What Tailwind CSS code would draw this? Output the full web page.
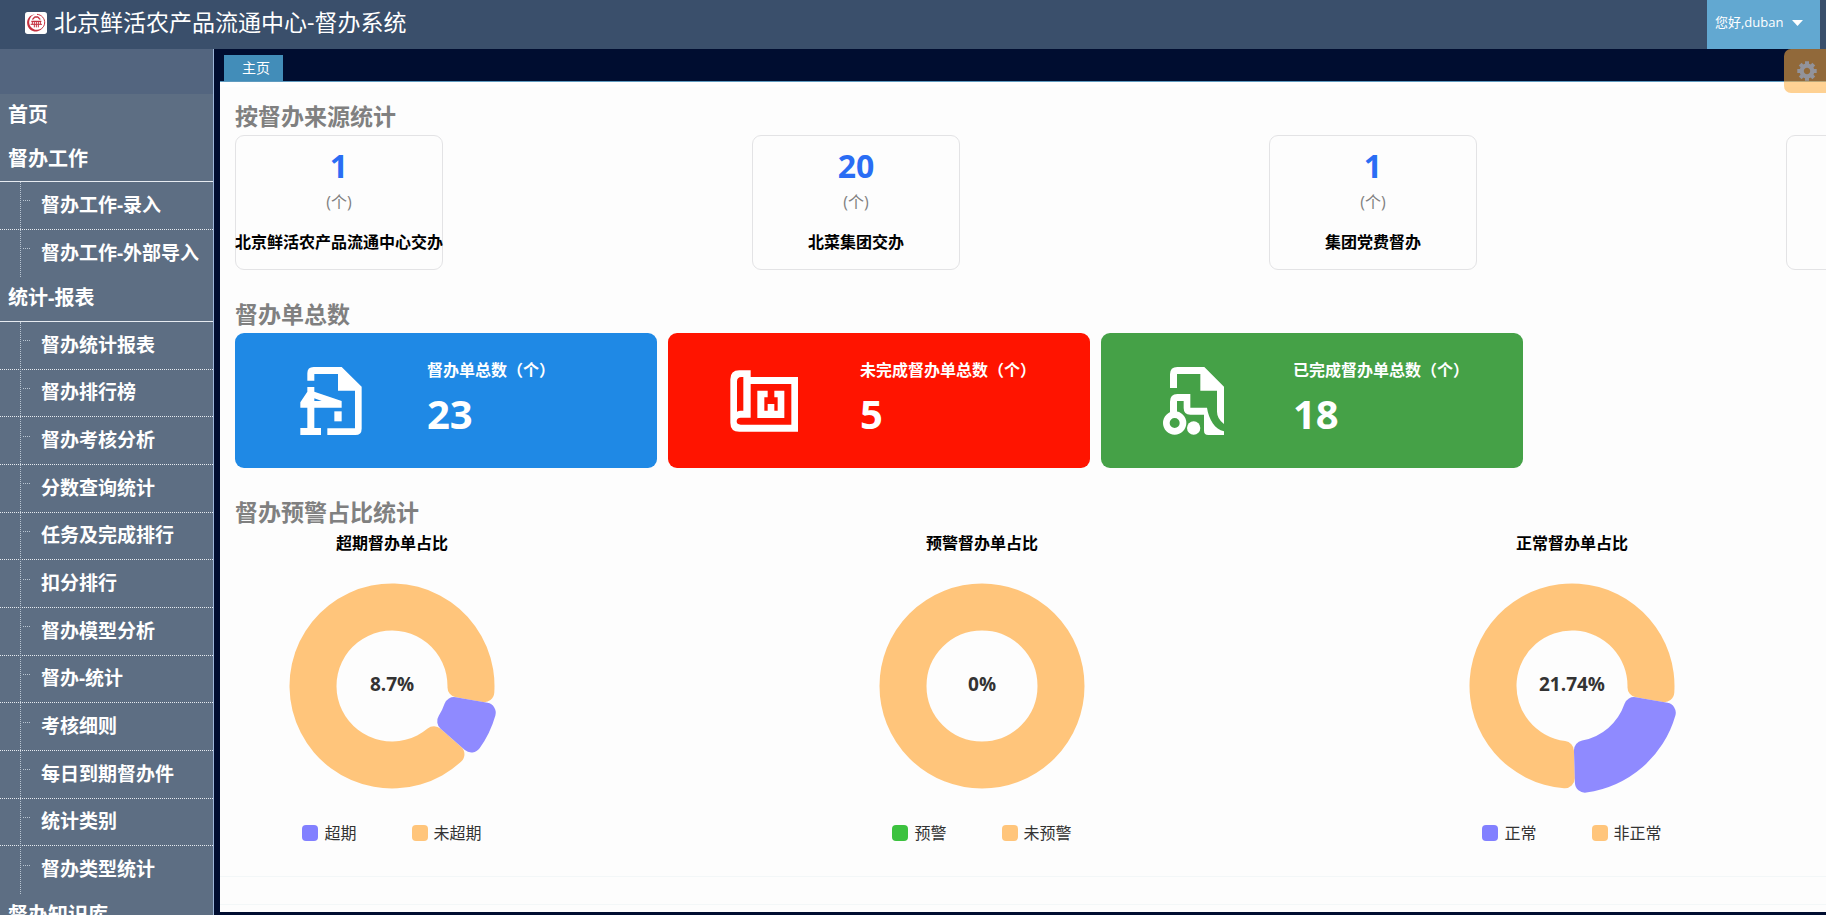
<!DOCTYPE html>
<html lang="zh-CN">
<head>
<meta charset="utf-8">
<title>北京鲜活农产品流通中心-督办系统</title>
<script src="https://cdn.jsdelivr.net/npm/@tailwindcss/browser@4"></script>
</head>
<body class="flex h-screen flex-col overflow-hidden bg-[#000d30] font-['Open_Sans','Noto_Sans_CJK_SC',sans-serif] text-black">

<header class="flex h-[49px] shrink-0 items-stretch justify-between bg-[#3a4f6b] pr-[6px] pl-[25px] text-white">
  <div class="flex items-center gap-[7px] pb-[6px]">
    <svg class="mt-[2px] size-[22px]" viewBox="0 0 66 66" aria-hidden="true">
      <rect width="66" height="66" rx="8" fill="#fff"/>
      <path d="M30 7C12 9 4 24 7 38C10 52 24 61 38 58C46 56 51 52 54 46C46 54 34 56 24 50C13 43 10 30 15 20C18 13 23 9 30 7Z" fill="#c4303f"/>
      <g fill="none" stroke="#c4303f">
        <path d="M36 7C50 8 60 20 59 33C58 41 55 46 50 49" stroke-width="3"/>
        <path d="M28 15H40M22 22C26 21 27 19 28 16M46 22C42 21 41 19 40 16M19 28H49" stroke-width="4"/>
        <path d="M22 29V37M46 29V37M17 37H51M28 30V46M34 30V46M40 30V46" stroke-width="3"/>
      </g>
    </svg>
    <h1 class="text-[23px] leading-8">北京鲜活农产品流通中心-督办系统</h1>
  </div>
  <button type="button" class="flex w-[113px] items-center gap-[9px] bg-[#62a8d1] pb-[4px] pl-[8px] text-[13px] whitespace-nowrap">
    <span class="pt-px">您好,duban</span>
    <svg class="h-[6px] w-[11px]" viewBox="0 0 11 6" aria-hidden="true"><path d="M0 0h11L5.500 6z" fill="#fff"/></svg>
  </button>
</header>

<div class="relative flex min-h-0 flex-1">
  <nav class="w-[214px] shrink-0 overflow-hidden border-r border-[#9db7da] bg-[#5d6e83] font-bold whitespace-nowrap text-white" aria-label="主菜单">
    <div class="h-[45px] bg-[#53657f]"></div>
    <a href="#" class="flex h-[43px] items-center pb-[2px] pl-2 text-[20px]">首页</a>
    <a href="#" class="flex h-[45px] items-center border-b border-[#e6ebf1] pl-2 text-[20px]">督办工作</a>
    <ul id="menu-work" class="relative grid h-[95px] auto-rows-fr text-[19px]"></ul>
    <a href="#" class="flex h-[45px] items-center border-b border-[#e6ebf1] pb-[2px] pl-2 text-[20px]">统计-报表</a>
    <ul id="menu-report" class="relative grid h-[572px] auto-rows-fr text-[19px]"></ul>
    <a href="#" class="flex h-[45px] items-center pb-[4px] pl-2 text-[20px]">督办知识库</a>
  </nav>

  <div class="flex min-w-0 flex-1 flex-col pb-[3px] pl-[6px]">
    <div class="flex h-[33px] shrink-0 items-end border-b border-[#5f9bc0] pl-1">
      <button type="button" class="h-[26px] w-[59px] bg-[#428db9] pl-[5px] text-[14px] leading-[26px] text-white">主页</button>
    </div>

    <main class="min-h-0 flex-1 overflow-hidden bg-[#fdfdfd]">
      <div class="h-[5px] bg-white"></div>
      <section class="pt-[14px] pl-[15px]">
        <h2 class="mb-1 text-[23px] leading-[30px] font-bold text-[#808080]">按督办来源统计</h2>
        <div class="flex gap-[309px]">
          <article class="flex h-[135px] w-[208px] shrink-0 flex-col items-center rounded-[9px] border border-[#e3e3e5] pt-[11px] whitespace-nowrap">
            <strong class="text-[32px] leading-[38px] text-[#2a6df4]">1</strong>
            <span class="mt-[5px] text-[16px] leading-6 text-[#808080]">(个)</span>
            <h3 class="mt-4 text-[16px] leading-6 font-bold">北京鲜活农产品流通中心交办</h3>
          </article>
          <article class="flex h-[135px] w-[208px] shrink-0 flex-col items-center rounded-[9px] border border-[#e3e3e5] pt-[11px] whitespace-nowrap">
            <strong class="text-[32px] leading-[38px] text-[#2a6df4]">20</strong>
            <span class="mt-[5px] text-[16px] leading-6 text-[#808080]">(个)</span>
            <h3 class="mt-4 text-[16px] leading-6 font-bold">北菜集团交办</h3>
          </article>
          <article class="flex h-[135px] w-[208px] shrink-0 flex-col items-center rounded-[9px] border border-[#e3e3e5] pt-[11px] whitespace-nowrap">
            <strong class="text-[32px] leading-[38px] text-[#2a6df4]">1</strong>
            <span class="mt-[5px] text-[16px] leading-6 text-[#808080]">(个)</span>
            <h3 class="mt-4 text-[16px] leading-6 font-bold">集团党费督办</h3>
          </article>
          <article class="h-[135px] w-[208px] shrink-0 rounded-[9px] border border-[#e3e3e5]"></article>
        </div>
      </section>

      <section class="pt-[29px] pl-[15px]">
        <h2 class="mb-1 text-[23px] leading-[30px] font-bold text-[#808080]">督办单总数</h2>
        <div class="flex gap-[11px] text-white">
          <article class="flex h-[135px] w-[422px] shrink-0 items-center gap-14 rounded-[9px] bg-[#1f89e5] pl-14">
            <svg class="size-20" viewBox="213 213 240 240" fill="#fff" fill-rule="evenodd" aria-hidden="true">
              <path d="M262 272V250Q262 231 281 231H365L425 290V416Q425 435 406 435H322V415H405V302H354V252H283V272Z"/>
              <path d="M262 291H283V305L365 333V353H283V414H303V435H241V414H262V353H241V337L262 305ZM283 325V333H305Z"/>
              <path d="M343 364H365V394H343Z"/>
            </svg>
            <div class="pb-[2px]">
              <h3 class="text-[16px] leading-6 font-bold">督办单总数（个）</h3>
              <p class="mt-1 text-[40px] leading-[56px] font-bold">23</p>
            </div>
          </article>
          <article class="flex h-[135px] w-[422px] shrink-0 items-center gap-14 rounded-[9px] bg-[#ff1400] pl-14">
            <svg class="size-20" viewBox="192 123 240 240" fill="#fff" fill-rule="evenodd" aria-hidden="true">
              <path d="M272 151H238Q211 151 211 178V308Q211 335 238 335H414V171H272ZM250 171V272H242Q236 272 231 275V185Q231 171 244 171ZM272 192H394V314H242Q230 314 230 304Q230 293 242 293H272Z"/>
              <path d="M292 212H323V232H313V272H323V252H343V272H353V232H343V212H373V294H292Z"/>
            </svg>
            <div class="pb-[2px]">
              <h3 class="text-[16px] leading-6 font-bold">未完成督办单总数（个）</h3>
              <p class="mt-1 text-[40px] leading-[56px] font-bold">5</p>
            </div>
          </article>
          <article class="flex h-[135px] w-[422px] shrink-0 items-center gap-14 rounded-[9px] bg-[#45a147] pl-14">
            <svg class="size-20" viewBox="201 123 240 240" fill="#fff" fill-rule="evenodd" aria-hidden="true">
              <path d="M240 204V163Q240 141 262 141H343L402 200V312Q381 296 381 275V212H331V162H261V204Z"/>
              <path d="M240 285V245Q240 222 262 222H301V263H351C356 298 375 328 402 334V345H355Q342 345 342 332V284H301Q281 284 281 264V243H261V285Z"/>
              <path d="M254 274A35 35 0 1 1 254 344A35 35 0 1 1 254 274ZM254 294A15 15 0 1 0 254 324A15 15 0 1 0 254 294Z"/>
              <circle cx="311" cy="324" r="20"/>
            </svg>
            <div class="pb-[2px]">
              <h3 class="text-[16px] leading-6 font-bold">已完成督办单总数（个）</h3>
              <p class="mt-1 text-[40px] leading-[56px] font-bold">18</p>
            </div>
          </article>
        </div>
      </section>

      <section class="border-b border-[#f3f7f8] pt-[29px] pb-[31px] pl-[15px]">
        <h2 class="mb-1 text-[23px] leading-[30px] font-bold text-[#808080]">督办预警占比统计</h2>
        <div class="flex gap-[275px]">
          <figure class="flex w-[314px] mr-px shrink-0 flex-col items-center">
            <h3 class="text-[16px] leading-6 font-bold">超期督办单占比</h3>
            <svg class="mt-[11px] size-60" viewBox="-120 -120 240 240" data-share="8.7" role="img" aria-label="超期 8.7%">
              <text y="5" text-anchor="middle" font-size="19" font-weight="700" fill="#333">8.7%</text>
            </svg>
            <figcaption class="mt-[15px] flex gap-[55px] text-[16px] leading-6 text-[#333]">
              <span class="flex items-center gap-[6px]"><i class="size-4 rounded-[4px] bg-[#8280ff]"></i>超期</span>
              <span class="flex items-center gap-[6px]"><i class="size-4 rounded-[4px] bg-[#ffc57b]"></i>未超期</span>
            </figcaption>
          </figure>
          <figure class="flex w-[314px] mr-px shrink-0 flex-col items-center">
            <h3 class="text-[16px] leading-6 font-bold">预警督办单占比</h3>
            <svg class="mt-[11px] size-60" viewBox="-120 -120 240 240" data-share="0" role="img" aria-label="预警 0%">
              <text y="5" text-anchor="middle" font-size="19" font-weight="700" fill="#333">0%</text>
            </svg>
            <figcaption class="mt-[15px] flex gap-[55px] text-[16px] leading-6 text-[#333]">
              <span class="flex items-center gap-[6px]"><i class="size-4 rounded-[4px] bg-[#3cc23f]"></i>预警</span>
              <span class="flex items-center gap-[6px]"><i class="size-4 rounded-[4px] bg-[#ffc57b]"></i>未预警</span>
            </figcaption>
          </figure>
          <figure class="flex w-[314px] mr-px shrink-0 flex-col items-center">
            <h3 class="text-[16px] leading-6 font-bold">正常督办单占比</h3>
            <svg class="mt-[11px] size-60" viewBox="-120 -120 240 240" data-share="21.74" role="img" aria-label="正常 21.74%">
              <text y="5" text-anchor="middle" font-size="19" font-weight="700" fill="#333">21.74%</text>
            </svg>
            <figcaption class="mt-[15px] flex gap-[55px] text-[16px] leading-6 text-[#333]">
              <span class="flex items-center gap-[6px]"><i class="size-4 rounded-[4px] bg-[#8280ff]"></i>正常</span>
              <span class="flex items-center gap-[6px]"><i class="size-4 rounded-[4px] bg-[#ffc57b]"></i>非正常</span>
            </figcaption>
          </figure>
        </div>
      </section>
      <div class="h-7 border-b border-[#f3f7f8]"></div>
    </main>
  </div>

  <button type="button" aria-label="设置" class="absolute top-0 right-0 flex h-11 w-[42px] items-center rounded-l-[7px] bg-[#ffb042]/57 pl-[13px]">
    <svg class="size-5" viewBox="-10 -10 20 20" aria-hidden="true">
      <circle r="5.300" fill="none" stroke="#92939b" stroke-width="4.200"/>
      <g stroke="#92939b" stroke-width="4">
        <path d="M0-6.500V-9.700M0 6.500V9.700M-6.500 0H-9.700M6.500 0H9.700M4.600-4.600L6.800-6.800M-4.600-4.600L-6.800-6.800M4.600 4.600L6.800 6.800M-4.600 4.600L-6.800 6.800"/>
      </g>
    </svg>
  </button>
</div>

<script>
  const menus = {
    'menu-work': ['督办工作-录入', '督办工作-外部导入'],
    'menu-report': ['督办统计报表', '督办排行榜', '督办考核分析', '分数查询统计', '任务及完成排行', '扣分排行', '督办模型分析', '督办-统计', '考核细则', '每日到期督办件', '统计类别', '督办类型统计']
  };
  for (const [id, items] of Object.entries(menus)) {
    document.getElementById(id).innerHTML =
      '<li aria-hidden="true" class="absolute inset-y-0 left-5 border-l border-dotted border-[#b9c5d2]"></li>' +
      items.map(t => `<li class="border-b border-dotted border-[#e6ebf1] last:border-b-0"><a href="#" class="flex h-full items-center pb-px pl-[23px]"><span class="mr-[11px] mb-2 w-[7px] border-t border-dotted border-[#b9c5d2]"></span>${t}</a></li>`).join('');
  }

  // Ring sector with rounded corners; angles in degrees clockwise from the x axis.
  function sector(a0, a1, r, R, c) {
    const rad = Math.PI / 180, s = a0 * rad, e = a1 * rad;
    const p = (d, a) => (d * Math.cos(a)).toFixed(2) + ' ' + (d * Math.sin(a)).toFixed(2);
    const oa = Math.asin(c / (R - c)), ia = Math.asin(c / (r + c));
    const od = Math.sqrt((R - c) ** 2 - c * c), id = Math.sqrt((r + c) ** 2 - c * c);
    const bigO = e - s - 2 * oa > Math.PI ? 1 : 0, bigI = e - s - 2 * ia > Math.PI ? 1 : 0;
    return `M${p(id, s)}L${p(od, s)}A${c} ${c} 0 0 1 ${p(R, s + oa)}A${R} ${R} 0 ${bigO} 1 ${p(R, e - oa)}` +
      `A${c} ${c} 0 0 1 ${p(od, e)}L${p(id, e)}A${c} ${c} 0 0 1 ${p(r, e - ia)}A${r} ${r} 0 ${bigI} 0 ${p(r, s + ia)}A${c} ${c} 0 0 1 ${p(id, s)}Z`;
  }
  document.querySelectorAll('svg[data-share]').forEach(svg => {
    const share = +svg.dataset.share, start = 10, end = start + share * 3.6;
    svg.insertAdjacentHTML('afterbegin', share
      ? `<path fill="#ffc57b" d="${sector(end, start + 360, 55.5, 102.5, 10)}"/><path fill="#8f8aff" d="${sector(start, end, 55.5, 107.5, 10)}"/>`
      : '<circle r="79" fill="none" stroke="#ffc57b" stroke-width="47"/>');
  });
</script>
</body>
</html>
